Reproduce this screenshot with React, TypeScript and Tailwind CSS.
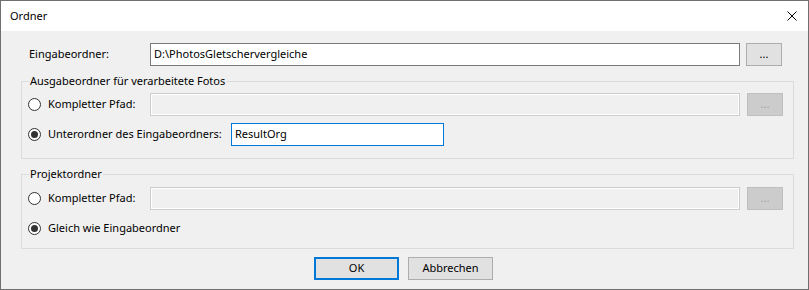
import React from 'react';

const font = { fontFamily: '"Segoe UI", "Noto Sans", Arial, sans-serif' };

function Radio({ checked }: { checked?: boolean }) {
  return (
    <span className="flex h-[13px] w-[13px] shrink-0 items-center justify-center rounded-full border border-[#333333] bg-white">
      {checked && <span className="h-[7px] w-[7px] rounded-full bg-[#333333]" />}
    </span>
  );
}

function BrowseButton({ disabled }: { disabled?: boolean }) {
  return (
    <button
      className={
        disabled
          ? 'ml-[7px] flex h-[23px] w-[36px] shrink-0 items-center justify-center border border-[#bfbfbf] bg-[#cccccc] text-[11px] leading-none text-[#9aa3a6]'
          : 'ml-[6px] flex h-[23px] w-[36px] shrink-0 items-center justify-center border border-[#adadad] bg-[#e1e1e1] text-[11px] leading-none text-black'
      }
    >
      <span className="-mt-[2px]">...</span>
    </button>
  );
}

function DisabledInput() {
  return <div className="h-[23px] w-[590px] shrink-0 border border-[#cccccc] bg-[#f0f0f0] shadow-[inset_0_0_0_1px_#ffffff]" />;
}

function Group({ title, className, children }: { title: string; className?: string; children: React.ReactNode }) {
  return (
    <fieldset className={`border border-[#dcdcdc] ${className ?? ''}`}>
      <legend className="ml-[7px] whitespace-nowrap px-[1px] text-[11px] leading-[16px]">{title}</legend>
      {children}
    </fieldset>
  );
}

export default function App() {
  return (
    <div className="flex h-[290px] w-[809px] flex-col whitespace-nowrap border border-[#6f6f6f] bg-[#f0f0f0] text-black" style={font}>
      {/* Title bar */}
      <div className="flex h-[30px] shrink-0 items-center justify-between bg-white pl-[9px] pr-[11px]">
        <span className="text-[11px]">Ordner</span>
        <svg width="10" height="10" viewBox="0 0 10 10" className="mb-[1px]">
          <path d="M0.5 0.5L9.5 9.5M9.5 0.5L0.5 9.5" stroke="#000" strokeWidth="1" />
        </svg>
      </div>

      <div className="flex flex-col pl-[20px] pr-[14px] text-[11px]">
        {/* Eingabeordner */}
        <div className="mt-[12px] flex h-[23px] items-center">
          <span className="w-[129px] shrink-0 pl-[8px]">Eingabeordner:</span>
          <div className="flex h-[23px] w-[590px] shrink-0 items-center border border-[#7a7a7a] bg-white px-[3px]">
            D:\PhotosGletschervergleiche
          </div>
          <BrowseButton />
        </div>

        {/* Ausgabeordner */}
        <Group title="Ausgabeordner für verarbeitete Fotos" className="mt-[7px] pb-[12px]">
          <div className="mt-[4px] flex h-[23px] items-center">
            <div className="flex w-[128px] shrink-0 items-center pl-[6px]">
              <Radio />
              <span className="ml-[7px]">Kompletter Pfad:</span>
            </div>
            <DisabledInput />
            <BrowseButton disabled />
          </div>
          <div className="mt-[7px] flex h-[23px] items-center">
            <div className="flex w-[209px] shrink-0 items-center pl-[6px]">
              <Radio checked />
              <span className="ml-[7px]">Unterordner des Eingabeordners:</span>
            </div>
            <div className="flex h-[23px] w-[213px] shrink-0 items-center border border-[#0078d7] bg-white px-[3px]">ResultOrg</div>
          </div>
        </Group>

        {/* Projektordner */}
        <Group title="Projektordner" className="mt-[7px] pb-[8px]">
          <div className="mt-[5px] flex h-[23px] items-center">
            <div className="flex w-[128px] shrink-0 items-center pl-[6px]">
              <Radio />
              <span className="ml-[7px]">Kompletter Pfad:</span>
            </div>
            <DisabledInput />
            <BrowseButton disabled />
          </div>
          <div className="mt-[7px] flex h-[23px] items-center pl-[6px]">
            <Radio checked />
            <span className="ml-[7px]">Gleich wie Eingabeordner</span>
          </div>
        </Group>

        {/* Buttons */}
        <div className="mt-[8px] flex justify-center gap-[9px] pr-[8px]">
          <button className="h-[23px] w-[85px] border-2 border-[#0078d7] bg-[#e1e1e1] text-[11px]">OK</button>
          <button className="h-[23px] w-[85px] border border-[#adadad] bg-[#e1e1e1] text-[11px]">Abbrechen</button>
        </div>
      </div>
    </div>
  );
}
